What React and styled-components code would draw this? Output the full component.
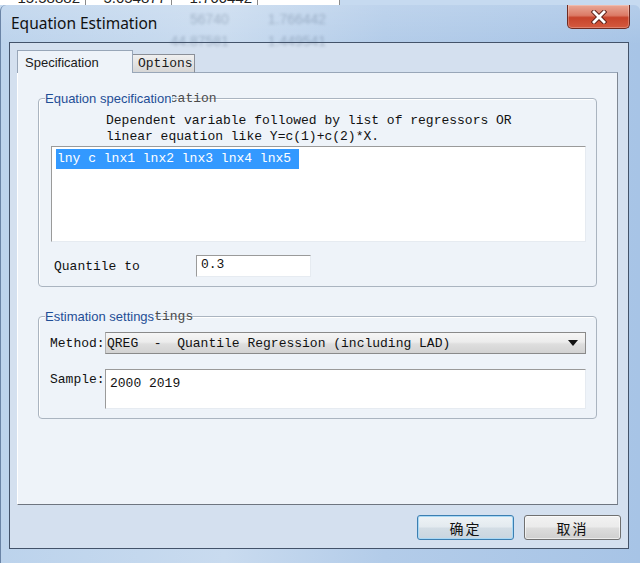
import styled, { createGlobalStyle } from "styled-components";

const GlobalStyle = createGlobalStyle`
  html, body { margin: 0; padding: 0; }
  body {
    width: 640px;
    height: 563px;
    overflow: hidden;
    background: #c6daf0;
    font-family: "Liberation Sans", Arial, sans-serif;
  }
`;

const MONO = `"Liberation Mono", "Noto Sans CJK SC", monospace`;
const PANEL_BG = "#eef3f9";

const Page = styled.div`
  width: 640px;
  height: 563px;
  display: flex;
  flex-direction: column;
`;

// the spreadsheet behind the dialog, only its bottom edge shows
const Sheet = styled.div`
  height: 5px;
  width: 340px;
  display: flex;
  align-items: flex-end;
  overflow: hidden;
  background: #fff;
`;

const SheetCell = styled.div`
  flex: none;
  width: ${(p) => p.$w}px;
  height: 14px;
  box-sizing: border-box;
  padding-right: 5px;
  border-right: 1px solid #8a8a8a;
  text-align: right;
  font: 15px/14px "Liberation Sans", Arial, sans-serif;
  color: #222;
`;

const Window = styled.div`
  flex: 1;
  position: relative;
  display: flex;
  flex-direction: column;
  padding: 0 11px 14px 8px;
  border-left: 1px solid #6a84a6;
  border-radius: 6px 6px 0 0;
  background:
    linear-gradient(180deg, rgba(255,255,255,0.15) 0%, rgba(255,255,255,0) 40px),
    linear-gradient(90deg, #bcd3ec 0%, #c9dbef 35%, #b3cce9 60%, #a7c4e6 100%);
`;

const GlassEcho = styled.div`
  position: absolute;
  left: 150px;
  top: 6px;
  display: flex;
  flex-direction: column;
  gap: 6px;
  font: 14px "Liberation Sans", Arial, sans-serif;
  color: #3b4f6a;
  opacity: 0.3;
  filter: blur(1.8px);
  white-space: pre;
  pointer-events: none;
`;

const TitleBar = styled.div`
  position: relative;
  height: 37px;
  display: flex;
  align-items: flex-start;
  justify-content: space-between;
`;

const Title = styled.div`
  margin: 8px 0 0 2px;
  font: 15.5px/20px "Noto Sans", "Liberation Sans", sans-serif;
  color: #111;
`;

const CloseButton = styled.div`
  width: 63px;
  height: 24px;
  box-sizing: border-box;
  margin-right: -1px;
  display: flex;
  align-items: center;
  justify-content: center;
  border: 1px solid #6e2b22;
  border-top: none;
  border-radius: 0 0 5px 5px;
  background: linear-gradient(180deg, #e9a897 0%, #dc7b66 45%, #c7432b 55%, #d45a3f 100%);
  box-shadow: inset 0 0 0 1px rgba(255,255,255,0.25);
`;

const Client = styled.div`
  flex: 1;
  display: flex;
  flex-direction: column;
  padding: 7px 10px 8px 7px;
  border: 1px solid #43536a;
  background: #d4e0ef;
`;

const Tabs = styled.div`
  height: 23px;
  margin-bottom: -1px;
  display: flex;
  align-items: flex-end;
`;

const Tab = styled.div`
  position: relative;
  z-index: 1;
  box-sizing: border-box;
  width: ${(p) => p.$w}px;
  height: ${(p) => (p.$active ? 23 : 19)}px;
  display: flex;
  align-items: center;
  padding-left: ${(p) => (p.$active ? 7 : 5)}px;
  border: 1px solid ${(p) => (p.$active ? "#98a6b8" : "#8a8f98")};
  border-bottom: ${(p) => (p.$active ? "none" : "1px solid #98a6b8")};
  border-left: ${(p) => (p.$active ? "1px solid #98a6b8" : "none")};
  background: ${(p) =>
    p.$active ? PANEL_BG : "linear-gradient(180deg, #f0f0f0 0%, #e2e2e2 55%, #d6d6d6 100%)"};
  font: ${(p) => (p.$active ? `13px "Liberation Sans", Arial, sans-serif` : `13px ${MONO}`)};
  color: #1a1a1a;
`;

const Panel = styled.div`
  flex: 1;
  display: flex;
  flex-direction: column;
  padding: 0 20px;
  border: 1px solid;
  border-color: #98a6b8 #7f8793 #6e7580 #ffffff;
  background: ${PANEL_BG};
`;

const Group = styled.fieldset`
  margin: ${(p) => p.$top}px 0 0;
  padding: 0 10px ${(p) => p.$bottom}px 12px;
  min-width: 0;
  border: 1px solid #aab4c0;
  border-radius: 4px;
  box-shadow: inset 1px 1px 0 #fff;
`;

const Legend = styled.legend`
  position: relative;
  margin-left: -6px;
  padding: 0;
  height: 16px;
  line-height: 16px;
`;

const LegendEcho = styled.span`
  position: absolute;
  left: 0;
  top: 1px;
  font: 13px ${MONO};
  color: #4a4a4a;
  white-space: pre;
`;

const LegendText = styled.span`
  position: relative;
  display: inline-block;
  padding-right: 1px;
  background: ${PANEL_BG};
  font: 13px "Liberation Sans", Arial, sans-serif;
  color: #1f4e96;
  white-space: pre;
`;

const Hint = styled.div`
  margin: 7px 0 0 55px;
  font: 13px/16px ${MONO};
  color: #111;
  white-space: pre;
`;

const EditBox = styled.div`
  box-sizing: border-box;
  height: ${(p) => p.$h}px;
  margin-top: ${(p) => p.$mt || 0}px;
  padding: ${(p) => p.$pad};
  border: 1px solid;
  border-color: #9a9a9a #e6ebf1 #e6ebf1 #9a9a9a;
  background: #fff;
  font: 13px/18px ${MONO};
  color: #111;
  white-space: pre;
  flex: ${(p) => (p.$grow ? 1 : "none")};
  width: ${(p) => (p.$w ? `${p.$w}px` : "auto")};
`;

const Selected = styled.span`
  display: inline-block;
  padding: 1px 8px 1px 1px;
  background: #3399ff;
  color: #fff;
  line-height: 18px;
`;

const Row = styled.div`
  display: flex;
  align-items: ${(p) => p.$align || "center"};
  margin-top: ${(p) => p.$mt}px;
`;

const Label = styled.div`
  flex: none;
  width: ${(p) => p.$w}px;
  margin-left: ${(p) => p.$ml || 0}px;
  padding-top: ${(p) => p.$pt || 0}px;
  font: 13px ${MONO};
  color: #111;
  white-space: pre;
`;

const Select = styled.div`
  flex: 1;
  box-sizing: border-box;
  height: 22px;
  display: flex;
  align-items: center;
  justify-content: space-between;
  padding: 0 7px 0 1px;
  border: 1px solid #8a8a8a;
  border-left-color: #b0b0b0;
  background: linear-gradient(180deg, #f6f6f6 0%, #ececec 45%, #dedede 55%, #d2d2d2 100%);
  font: 13px ${MONO};
  color: #111;
  white-space: pre;
`;

const Arrow = styled.span`
  width: 0;
  height: 0;
  border-left: 5px solid transparent;
  border-right: 5px solid transparent;
  border-top: 6px solid #111;
`;

const ButtonRow = styled.div`
  display: flex;
  justify-content: flex-end;
  gap: 10px;
  margin: 10px -3px 0 0;
`;

const Button = styled.div`
  width: 97px;
  height: 25px;
  box-sizing: border-box;
  display: flex;
  align-items: center;
  justify-content: center;
  border-radius: 3px;
  border: 1px solid ${(p) => (p.$default ? "#3c7fb1" : "#707070")};
  background: ${(p) =>
    p.$default
      ? "linear-gradient(180deg, #eef3f6 0%, #e3eaef 48%, #d3dde5 52%, #c9d5df 100%)"
      : "linear-gradient(180deg, #f2f2f2 0%, #ebebeb 48%, #dddddd 52%, #cfcfcf 100%)"};
  box-shadow: ${(p) =>
    p.$default ? "inset 0 0 0 1px #a9d8f5" : "inset 0 0 0 1px rgba(255,255,255,0.6)"};
  font: 14px "Noto Sans CJK SC", "Noto Sans", sans-serif;
  color: #111;
  letter-spacing: 2px;
`;

function CloseGlyph() {
  return (
    <svg width="16" height="14" viewBox="0 0 16 14">
      <path d="M3 2 L13 12 M13 2 L3 12" stroke="#5a1e16" strokeWidth="4.6" strokeLinecap="square" />
      <path d="M3 2 L13 12 M13 2 L3 12" stroke="#ffffff" strokeWidth="2.8" strokeLinecap="square" />
    </svg>
  );
}

function GroupTitle({ text }) {
  return (
    <Legend>
      <LegendEcho>{text}</LegendEcho>
      <LegendText>{text}</LegendText>
    </Legend>
  );
}

export default function App() {
  return (
    <Page>
      <GlobalStyle />
      <Sheet>
        <SheetCell $w={86}>15.58882</SheetCell>
        <SheetCell $w={86}>5.054877</SheetCell>
        <SheetCell $w={86}>1.766442</SheetCell>
        <SheetCell $w={82}></SheetCell>
      </Sheet>

      <Window>
        <GlassEcho>
          <span>{"          56740          1.766442"}</span>
          <span>{"     44.87581          1.449541"}</span>
        </GlassEcho>
        <TitleBar>
          <Title>Equation Estimation</Title>
          <CloseButton>
            <CloseGlyph />
          </CloseButton>
        </TitleBar>

        <Client>
          <Tabs>
            <Tab $active $w={116}>Specification</Tab>
            <Tab $w={62}>Options</Tab>
          </Tabs>

          <Panel>
            <Group $top={17} $bottom={9}>
              <GroupTitle text="Equation specification" />
              <Hint>
                {"Dependent variable followed by list of regressors OR\nlinear equation like Y=c(1)+c(2)*X."}
              </Hint>
              <EditBox $h={96} $mt={1} $pad="2px 4px">
                <Selected>lny c lnx1 lnx2 lnx3 lnx4 lnx5</Selected>
              </EditBox>
              <Row $mt={13}>
                <Label $w={142} $ml={3}>Quantile to</Label>
                <EditBox $h={22} $w={115} $pad="0 4px">0.3</EditBox>
              </Row>
            </Group>

            <Group $top={21} $bottom={9}>
              <GroupTitle text="Estimation settings" />
              <Row $mt={8}>
                <Label $w={55} $ml={-1}>Method:</Label>
                <Select>
                  <span>QREG  -  Quantile Regression (including LAD)</span>
                  <Arrow />
                </Select>
              </Row>
              <Row $mt={15} $align="flex-start">
                <Label $w={55} $ml={-1} $pt={3}>Sample:</Label>
                <EditBox $h={40} $grow $pad="5px 4px">2000 2019</EditBox>
              </Row>
            </Group>
          </Panel>

          <ButtonRow>
            <Button $default>确定</Button>
            <Button>取消</Button>
          </ButtonRow>
        </Client>
      </Window>
    </Page>
  );
}
